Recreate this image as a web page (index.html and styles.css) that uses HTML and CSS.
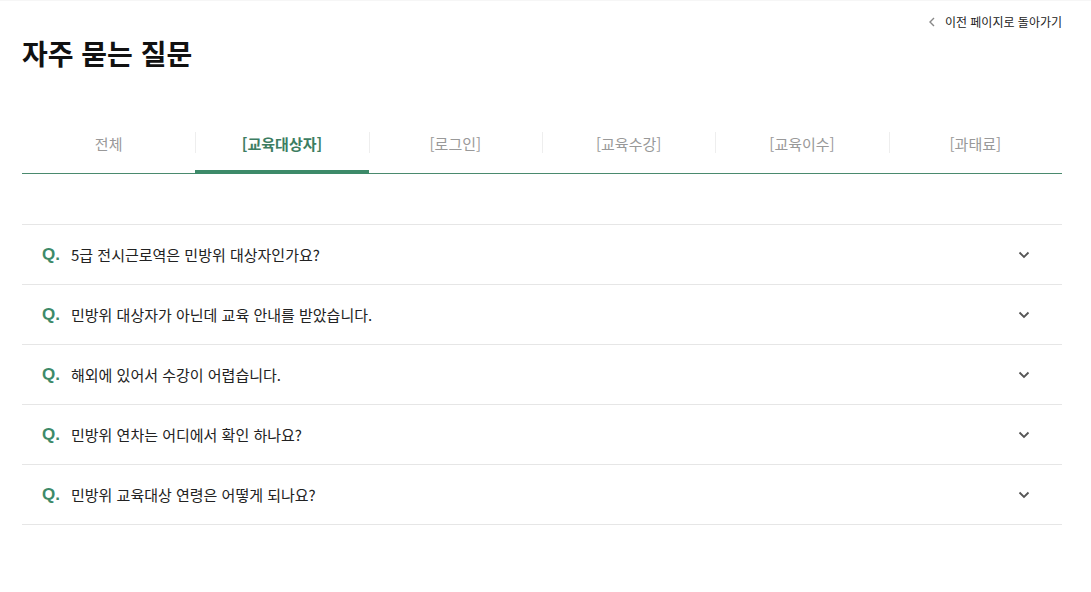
FILE: index.html
```html
<!DOCTYPE html>
<html lang="ko">
<head>
<meta charset="utf-8">
<link rel="stylesheet" href="styles.css">
</head>
<body>
<div class="page">
  <div class="topbar">
    <a class="back" href="#"><span class="back-ico"><svg width="8" height="10" viewBox="0 0 8 10"><path d="M6 1 L2 5 L6 9" fill="none" stroke="#888" stroke-width="1.4"/></svg></span>이전 페이지로 돌아가기</a>
  </div>
  <h1 class="title">자주 묻는 질문</h1>
  <nav class="tabs">
    <a class="tab">전체</a>
    <a class="tab active">[교육대상자]</a>
    <a class="tab">[로그인]</a>
    <a class="tab">[교육수강]</a>
    <a class="tab">[교육이수]</a>
    <a class="tab">[과태료]</a>
  </nav>
  <ul class="faq">
    <li class="item"><span class="q">Q.</span><span class="text">5급 전시근로역은 민방위 대상자인가요?</span><span class="chev"><svg width="12" height="8" viewBox="0 0 12 8"><path d="M1.5 1.5 L6 6 L10.5 1.5" fill="none" stroke="#555" stroke-width="1.8"/></svg></span></li>
    <li class="item"><span class="q">Q.</span><span class="text">민방위 대상자가 아닌데 교육 안내를 받았습니다.</span><span class="chev"><svg width="12" height="8" viewBox="0 0 12 8"><path d="M1.5 1.5 L6 6 L10.5 1.5" fill="none" stroke="#555" stroke-width="1.8"/></svg></span></li>
    <li class="item"><span class="q">Q.</span><span class="text">해외에 있어서 수강이 어렵습니다.</span><span class="chev"><svg width="12" height="8" viewBox="0 0 12 8"><path d="M1.5 1.5 L6 6 L10.5 1.5" fill="none" stroke="#555" stroke-width="1.8"/></svg></span></li>
    <li class="item"><span class="q">Q.</span><span class="text">민방위 연차는 어디에서 확인 하나요?</span><span class="chev"><svg width="12" height="8" viewBox="0 0 12 8"><path d="M1.5 1.5 L6 6 L10.5 1.5" fill="none" stroke="#555" stroke-width="1.8"/></svg></span></li>
    <li class="item"><span class="q">Q.</span><span class="text">민방위 교육대상 연령은 어떻게 되나요?</span><span class="chev"><svg width="12" height="8" viewBox="0 0 12 8"><path d="M1.5 1.5 L6 6 L10.5 1.5" fill="none" stroke="#555" stroke-width="1.8"/></svg></span></li>
  </ul>
</div>
</body>
</html>
```
FILE: styles.css
```css
* { box-sizing: border-box; }
html, body { margin: 0; padding: 0; background: #fff; }
body {
  font-family: "Noto Sans CJK KR", "Noto Sans", sans-serif;
  color: #222;
  border-top: 1px solid #f6f6f6;
}
.page {
  width: 1040px;
  margin-left: 22px;
}
.topbar {
  display: flex;
  justify-content: flex-end;
  padding-top: 12px;
  height: 30px;
}
.back {
  display: flex;
  align-items: center;
  font-size: 12px;
  color: #222;
  text-decoration: none;
  line-height: 18px;
}
.back-ico {
  display: flex;
  align-items: center;
  margin-right: 9px;
}
.title {
  margin: 2px 0 0 0;
  font-size: 28px;
  font-weight: 700;
  line-height: 40px;
  color: #111;
}
.tabs {
  display: grid;
  grid-template-columns: repeat(6, 1fr);
  margin-top: 57px;
  border-bottom: 1px solid #4a8a6e;
  height: 44px;
}
.tab {
  position: relative;
  display: flex;
  justify-content: center;
  align-items: flex-start;
  padding-top: 3px;
  font-size: 15px;
  color: #999;
  line-height: 22px;
}
.tab + .tab::before {
  content: "";
  position: absolute;
  left: 0;
  top: 2px;
  width: 1px;
  height: 21px;
  background: #eee;
}
.tab.active {
  color: #3d7d62;
  font-weight: 700;
  border-bottom: 4px solid #3d8a69;
  margin-bottom: -1px;
}
.faq {
  list-style: none;
  margin: 50px 0 0 0;
  padding: 0;
  border-top: 1px solid #e6e6e6;
}
.item {
  display: flex;
  align-items: center;
  height: 60px;
  border-bottom: 1px solid #e6e6e6;
  padding-left: 20px;
  padding-right: 32px;
}
.q {
  font-family: "Liberation Sans", Arial, sans-serif;
  font-weight: 700;
  font-size: 17px;
  color: #3d8a69;
  width: 29px;
}
.text {
  flex: 1;
  font-size: 15px;
  color: #222;
}
.chev {
  display: flex;
  align-items: center;
}
```
